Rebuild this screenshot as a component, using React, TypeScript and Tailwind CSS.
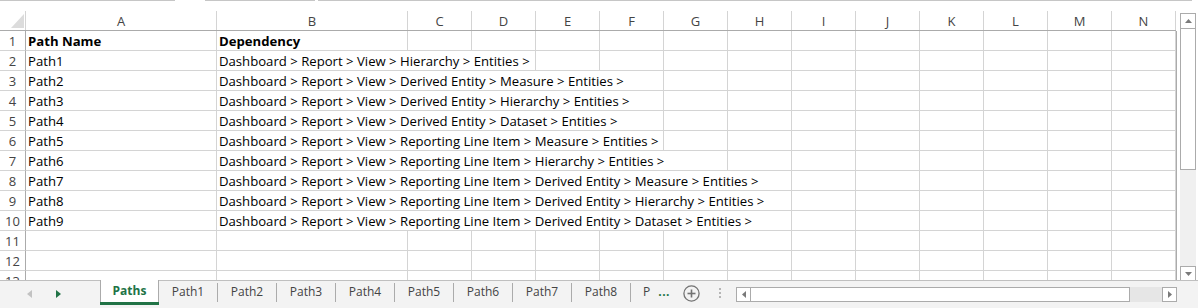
import React from 'react';

const letters = ['A', 'B', 'C', 'D', 'E', 'F', 'G', 'H', 'I', 'J', 'K', 'L', 'M', 'N'];

const rowsData: [string, string][] = [
  ['Path Name', 'Dependency'],
  ['Path1', 'Dashboard > Report > View > Hierarchy > Entities >'],
  ['Path2', 'Dashboard > Report > View > Derived Entity > Measure > Entities >'],
  ['Path3', 'Dashboard > Report > View > Derived Entity > Hierarchy > Entities >'],
  ['Path4', 'Dashboard > Report > View > Derived Entity > Dataset > Entities >'],
  ['Path5', 'Dashboard > Report > View > Reporting Line Item > Measure > Entities >'],
  ['Path6', 'Dashboard > Report > View > Reporting Line Item > Hierarchy > Entities >'],
  ['Path7', 'Dashboard > Report > View > Reporting Line Item > Derived Entity > Measure > Entities >'],
  ['Path8', 'Dashboard > Report > View > Reporting Line Item > Derived Entity > Hierarchy > Entities >'],
  ['Path9', 'Dashboard > Report > View > Reporting Line Item > Derived Entity > Dataset > Entities >'],
  ['', ''],
  ['', ''],
  ['', ''],
];

const tabs = ['Path1', 'Path2', 'Path3', 'Path4', 'Path5', 'Path6', 'Path7', 'Path8'];

function wClass(i: number) {
  return i < 2 ? 'w-[191px]' : 'w-[64px]';
}

function Tri({ dir, color, w = 7, h = 4 }: { dir: 'up' | 'down' | 'left' | 'right'; color: string; w?: number; h?: number }) {
  let pts = '';
  if (dir === 'up') pts = `0,${h} ${w},${h} ${w / 2},0`;
  if (dir === 'down') pts = `0,0 ${w},0 ${w / 2},${h}`;
  if (dir === 'left') pts = `${w},0 ${w},${h} 0,${h / 2}`;
  if (dir === 'right') pts = `0,0 0,${h} ${w},${h / 2}`;
  return (
    <svg width={w} height={h} viewBox={`0 0 ${w} ${h}`} className="block">
      <polygon points={pts} fill={color} />
    </svg>
  );
}

export default function App() {
  return (
    <div className="w-[1198px] h-[308px] bg-white overflow-hidden flex flex-col font-['Open_Sans',sans-serif] text-black">
      {/* top strip */}
      <div className="h-[11px] flex shrink-0">
        <div className="w-[175px] border-t border-[#c6c6c6]" />
        <div className="w-[30px]" />
        <div className="w-[110px] border-t border-[#c6c6c6]" />
        <div className="w-[3px]" />
        <div className="w-[874px] border-t border-[#c6c6c6]" />
      </div>

      <div className="flex h-[269px] shrink-0">
        {/* grid */}
        <div className="w-[1177px] shrink-0 flex flex-col">
          {/* header row */}
          <div className="flex h-[20px] shrink-0">
            <div className="w-[1176px] flex border-b border-[#ababab]">
              <div className="w-[26px] shrink-0 border-r border-[#d4d4d4] flex items-end justify-end pr-[1px] pb-[2px]">
                <svg width="13" height="14" viewBox="0 0 13 14" className="block">
                  <polygon points="13,0 13,14 0,14" fill="#dcdcdc" />
                </svg>
              </div>
              {letters.map((l, i) => (
                <div
                  key={l}
                  className={`${wClass(i)} shrink-0 border-r border-[#d4d4d4] flex items-end justify-center text-[13px] leading-[18px] text-[#444]`}
                >
                  {l}
                </div>
              ))}
            </div>
          </div>
          {/* body */}
          <div className="h-[249px] w-[1177px] overflow-hidden border-r border-[#ababab]">
            {rowsData.map(([a, b], r) => (
              <div key={r} className="flex h-[20px]">
                <div className="w-[26px] shrink-0 border-r border-r-[#ababab] border-b border-b-[#d4d4d4] flex items-end justify-center text-[13px] leading-[18px] text-[#444]">
                  {r + 1}
                </div>
                <div
                  className={`w-[191px] shrink-0 border-r border-b border-[#d4d4d4] flex items-end pl-[2px] text-[13.15px] leading-[18px] whitespace-nowrap ${
                    r === 0 ? 'font-bold' : ''
                  }`}
                >
                  {a}
                </div>
                <div className="w-[191px] shrink-0 border-r border-b border-[#d4d4d4] flex">
                  {b && (
                    <span
                      className={`relative z-10 bg-white h-full flex items-end pl-[2px] pr-[2px] text-[13.15px] leading-[18px] whitespace-nowrap ${
                        r === 0 ? 'font-bold' : ''
                      }`}
                    >
                      {b}
                    </span>
                  )}
                </div>
                {letters.slice(2).map((l) => (
                  <div key={l} className="w-[64px] shrink-0 border-r border-b border-[#d4d4d4]" />
                ))}
              </div>
            ))}
          </div>
        </div>

        {/* vertical scrollbar */}
        <div className="w-[21px] shrink-0 flex">
          <div className="ml-[3px] w-[16px] flex flex-col pt-[2px]">
            <div className="h-[16px] border border-[#ababab] bg-white flex items-center justify-center">
              <Tri dir="up" color="#7a7a7a" />
            </div>
            <div className="h-[141px] border border-t-0 border-[#ababab] bg-white" />
            <div className="flex-1 bg-[#f0f0f0]" />
            <div className="h-[14px] border border-b-0 border-[#ababab] bg-white flex items-center justify-center">
              <Tri dir="down" color="#7a7a7a" />
            </div>
          </div>
        </div>
      </div>

      {/* sheet tab bar */}
      <div className="h-[28px] shrink-0 flex bg-[#f3f3f3] text-[12px] leading-[16px]">
        <div className="w-[100px] shrink-0 border-t border-[#bfbfbf] flex items-center pb-[1px]">
          <div className="ml-[27px]">
            <Tri dir="left" color="#c2c2c2" w={5} h={8} />
          </div>
          <div className="ml-[24px]">
            <Tri dir="right" color="#217346" w={5} h={8} />
          </div>
        </div>

        <div className="w-[59px] shrink-0 flex flex-col">
          <div className="h-[22px] bg-white border-l border-r border-[#ababab] flex items-end justify-center pb-[3px] font-bold text-[#217346]">
            Paths
          </div>
          <div className="h-[3px] bg-[#217346]" />
        </div>

        <div className="flex-1 border-t border-[#bfbfbf] flex">
          {tabs.map((t) => (
            <div key={t} className="w-[59px] shrink-0 flex">
              <div className="flex-1 flex items-start justify-center pt-[3px] text-[#444]">{t}</div>
              <div className="w-px h-[19px] mt-[2px] bg-[#ababab]" />
            </div>
          ))}
          <div className="w-[52px] shrink-0 flex items-start pt-[3px] pl-[12px]">
            <span className="text-[#444]">P</span>
            <span className="ml-[8px] font-bold text-[#217346] tracking-[0.5px]">...</span>
          </div>
          <div className="w-[17px] shrink-0 flex items-start pt-[4px]">
            <svg width="17" height="17" viewBox="0 0 17 17" className="block">
              <circle cx="8.5" cy="8.5" r="7.6" fill="none" stroke="#737373" strokeWidth="1.3" />
              <line x1="8.5" y1="4.5" x2="8.5" y2="12.5" stroke="#737373" strokeWidth="1.6" />
              <line x1="4.5" y1="8.5" x2="12.5" y2="8.5" stroke="#737373" strokeWidth="1.6" />
            </svg>
          </div>
          <div className="w-[36px] shrink-0 flex items-start pt-[7px] pl-[19px]">
            <div className="flex flex-col gap-[2px]">
              <div className="w-[2px] h-[2px] bg-[#b5b5b5]" />
              <div className="w-[2px] h-[2px] bg-[#b5b5b5]" />
              <div className="w-[2px] h-[2px] bg-[#b5b5b5]" />
            </div>
          </div>
          {/* horizontal scrollbar */}
          <div className="w-[441px] shrink-0 h-[15px] mt-[6px] flex">
            <div className="w-[15px] border border-[#ababab] bg-white flex items-center justify-center">
              <Tri dir="left" color="#7a7a7a" w={4} h={7} />
            </div>
            <div className="w-[379px] border border-l-0 border-[#ababab] bg-white" />
            <div className="w-[32px] bg-[#e6e6e6]" />
            <div className="w-[15px] border border-[#ababab] bg-white flex items-center justify-center">
              <Tri dir="right" color="#7a7a7a" w={4} h={7} />
            </div>
          </div>
        </div>
      </div>
    </div>
  );
}
